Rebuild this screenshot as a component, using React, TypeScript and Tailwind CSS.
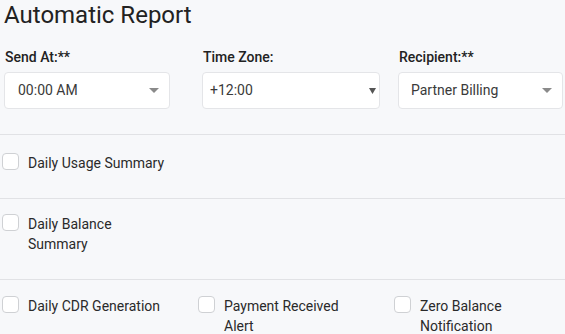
import React from "react";

const Caret = ({ dark }: { dark?: boolean }) =>
  dark ? (
    <svg width="7" height="6" viewBox="0 0 7 6" className="shrink-0">
      <path d="M0 0 L7 0 L3.5 6 Z" fill="#555" />
    </svg>
  ) : (
    <svg width="10" height="5" viewBox="0 0 10 5" className="shrink-0">
      <path d="M0 0 L10 0 L5 5 Z" fill="#8a8a8a" />
    </svg>
  );

const Field = ({
  label,
  value,
  width,
  pad,
  dark,
}: {
  label: string;
  value: string;
  width: string;
  pad: string;
  dark?: boolean;
}) => (
  <div className={`flex flex-col ${width}`}>
    <div className="text-[14px] leading-[20px] font-medium text-[#222] pl-[1px]">{label}</div>
    <div
      className={`mt-[5px] h-[37px] flex items-center justify-between bg-white border border-[#e4e5e8] rounded-[4px] ${pad}`}
    >
      <span className="text-[14px] text-[#3a3a3a]">{value}</span>
      <Caret dark={dark} />
    </div>
  </div>
);

const Check = ({ label }: { label: string }) => (
  <div className="flex items-start w-[196px] shrink-0">
    <div className="w-[17px] h-[17px] shrink-0 bg-white border border-[#cfd1d4] rounded-[4px]" />
    <div className="ml-[9px] w-[140px] text-[14px] leading-[20px] text-[#2a2a2a]">{label}</div>
  </div>
);

export default function App() {
  return (
    <div
      className="w-[565px] h-[334px] overflow-hidden bg-[#f7f8fa]"
      style={{ fontFamily: "Roboto, 'Liberation Sans', sans-serif" }}
    >
      <h1 className="pl-[4px] text-[24px] leading-[30px] text-[#222] font-normal">Automatic Report</h1>

      <div className="flex mt-[17px] pl-[4px]">
        <Field label="Send At:**" value="00:00 AM" width="w-[166px]" pad="pl-[13px] pr-[10px]" />
        <div className="ml-[32px]">
          <Field label="Time Zone:" value="+12:00" width="w-[178px]" pad="pl-[7px] pr-[3px]" dark />
        </div>
        <div className="ml-[18px]">
          <Field label="Recipient:**" value="Partner Billing" width="w-[165px]" pad="pl-[12px] pr-[10px]" />
        </div>
      </div>

      <div className="mt-[25px] border-t border-[#e1e2e5] h-[64px] pt-[18px] pl-[2px]">
        <Check label="Daily Usage Summary" />
      </div>
      <div className="border-t border-[#e1e2e5] h-[81px] pt-[15px] pl-[2px]">
        <Check label="Daily Balance Summary" />
      </div>
      <div className="border-t border-[#e1e2e5] pt-[16px] pl-[2px] flex">
        <Check label="Daily CDR Generation" />
        <Check label="Payment Received Alert" />
        <Check label="Zero Balance Notification" />
      </div>
    </div>
  );
}
